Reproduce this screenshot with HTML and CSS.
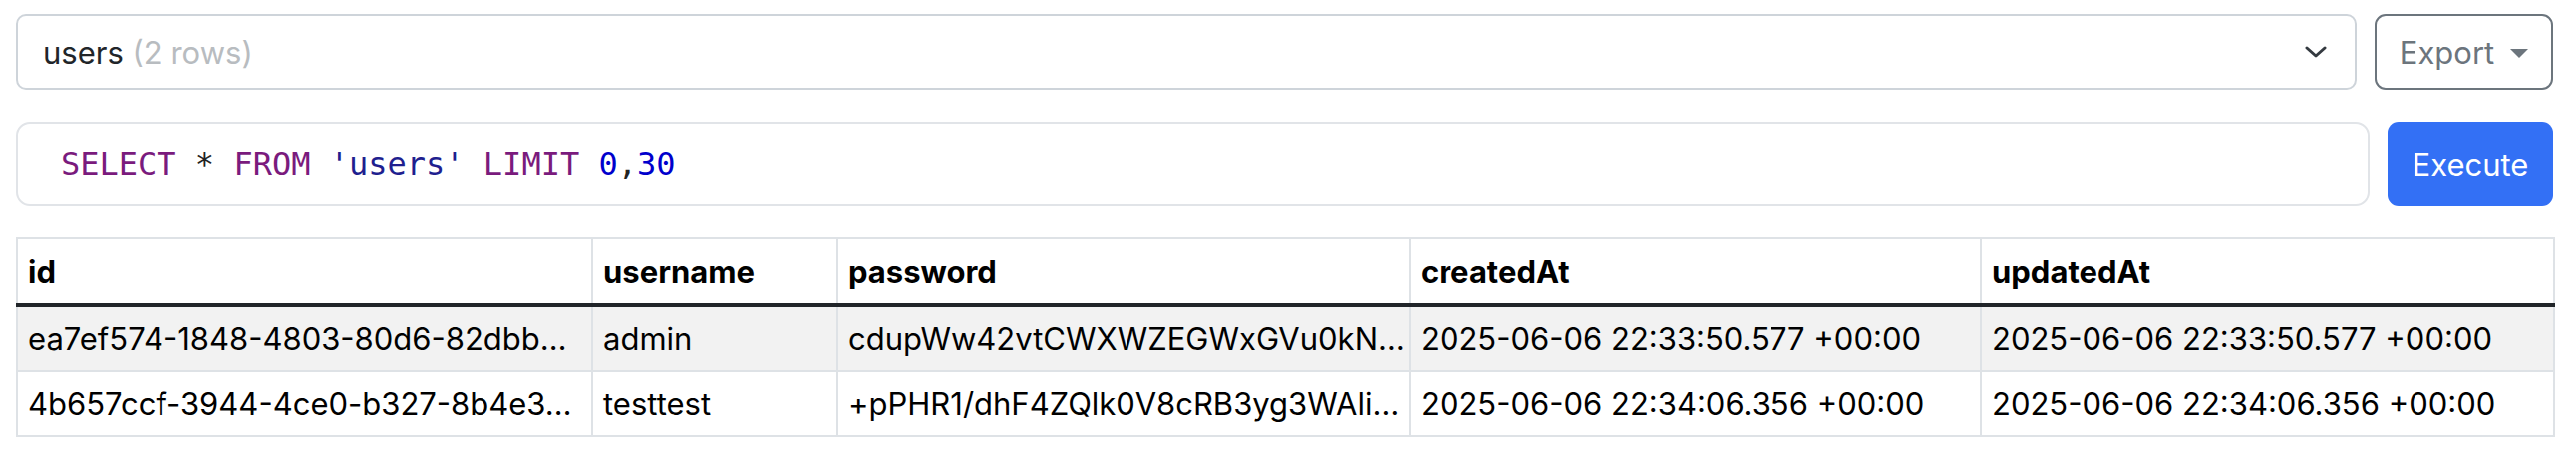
FILE: index.html
```html
<!DOCTYPE html>
<html>
<head>
<meta charset="utf-8">
<link rel="stylesheet" href="styles.css">
</head>
<body>
<div class="page">
  <div class="toolbar">
    <div class="select">
      <span class="sel-text">users <span class="muted">(2 rows)</span></span>
      <svg class="chevron" width="22" height="12" viewBox="0 0 22 12"><path d="M2 2 L11 10 L20 2" fill="none" stroke="#343a40" stroke-width="3" stroke-linecap="round" stroke-linejoin="round"/></svg>
    </div>
    <button class="btn-export">Export<span class="caret"></span></button>
  </div>
  <div class="query-row">
    <div class="editor"><span class="code"><span class="kw">SELECT</span> <span class="op">*</span> <span class="kw">FROM</span> <span class="str">'users'</span> <span class="kw">LIMIT</span> <span class="num">0</span><span class="op">,</span><span class="num">30</span></span></div>
    <button class="btn-exec">Execute</button>
  </div>
  <table class="grid">
    <colgroup>
      <col class="c-id"><col class="c-user"><col class="c-pass"><col class="c-created"><col class="c-updated">
    </colgroup>
    <thead>
      <tr><th>id</th><th>username</th><th>password</th><th>createdAt</th><th>updatedAt</th></tr>
    </thead>
    <tbody>
      <tr class="odd"><td>ea7ef574-1848-4803-80d6-82dbb…</td><td>admin</td><td>cdupWw42vtCWXWZEGWxGVu0kN…</td><td>2025-06-06 22:33:50.577 +00:00</td><td>2025-06-06 22:33:50.577 +00:00</td></tr>
      <tr><td>4b657ccf-3944-4ce0-b327-8b4e3…</td><td>testtest</td><td>+pPHR1/dhF4ZQlk0V8cRB3yg3WAli…</td><td>2025-06-06 22:34:06.356 +00:00</td><td>2025-06-06 22:34:06.356 +00:00</td></tr>
    </tbody>
  </table>
</div>
</body>
</html>
```
FILE: styles.css
```css
html, body {
  margin: 0;
  padding: 0;
  background: #ffffff;
}
body {
  font-family: Inter, "Liberation Sans", sans-serif;
  color: #212529;
}
.page {
  padding: 14px 23px 0 16px;
}
.toolbar {
  display: flex;
  gap: 18px;
  height: 76px;
}
.select {
  flex: 1;
  display: flex;
  align-items: center;
  justify-content: space-between;
  border: 2px solid #ced4da;
  border-radius: 10px;
  padding: 0 28px 0 25px;
  box-sizing: border-box;
  font-size: 31px;
}
.muted {
  color: #b8bcc0;
}
.chevron {
  display: block;
}
.btn-export {
  width: 179px;
  box-sizing: border-box;
  border: 2px solid #6c757d;
  border-radius: 11px;
  background: #fff;
  color: #6c757d;
  font-family: Inter, "Liberation Sans", sans-serif;
  font-size: 31px;
  display: flex;
  align-items: center;
  justify-content: center;
  gap: 16px;
  padding: 0;
}
.caret {
  width: 0;
  height: 0;
  border-left: 9px solid transparent;
  border-right: 9px solid transparent;
  border-top: 9px solid #6c757d;
  margin-top: 2px;
}
.query-row {
  display: flex;
  gap: 18px;
  margin-top: 32px;
  height: 84px;
}
.editor {
  flex: 1;
  box-sizing: border-box;
  border: 2px solid #e1e4e8;
  border-radius: 14px;
  display: flex;
  align-items: center;
  padding-left: 43px;
  font-family: "DejaVu Sans Mono", monospace;
  font-size: 32px;
  color: #333;
}
.code {
  white-space: pre;
}
.kw { color: #7a1b7d; }
.str { color: #1f1f8f; }
.num { color: #0000cc; }
.op { color: #222; }
.btn-exec {
  width: 166px;
  border: none;
  border-radius: 11px;
  background: #3370f5;
  color: #fff;
  font-family: Inter, "Liberation Sans", sans-serif;
  font-size: 31px;
  padding: 0;
}
.grid {
  margin-top: 32px;
  width: 2545px;
  table-layout: fixed;
  border-collapse: collapse;
  font-size: 31px;
}
.c-id { width: 577px; }
.c-user { width: 246px; }
.c-pass { width: 574px; }
.c-created { width: 573px; }
.c-updated { width: 575px; }
.grid th, .grid td {
  border: 2px solid #dee2e6;
  padding: 0 10px;
  text-align: left;
  white-space: nowrap;
  overflow: hidden;
  color: #000;
}
.grid th {
  height: 64px;
  font-weight: 700;
  border-bottom: 4px solid #212529;
}
.grid td {
  height: 63px;
}
.grid tr.odd td {
  background: #f2f2f2;
}
```
